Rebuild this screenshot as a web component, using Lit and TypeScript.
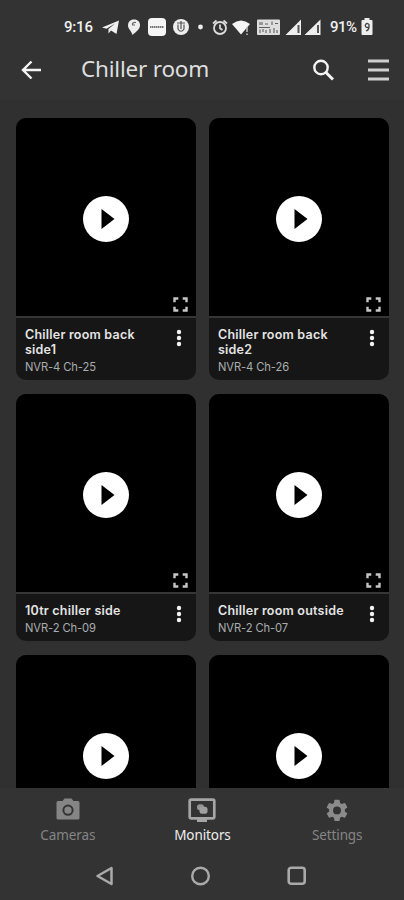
import { LitElement, html, css, svg, nothing } from "lit";
import { customElement, property } from "lit/decorators.js";

interface Camera { name: string; channel: string }

const cameras: (Camera | null)[] = [
  { name: "Chiller room back side1", channel: "NVR-4 Ch-25" },
  { name: "Chiller room back side2", channel: "NVR-4 Ch-26" },
  { name: "10tr chiller side", channel: "NVR-2 Ch-09" },
  { name: "Chiller room outside", channel: "NVR-2 Ch-07" },
  null,
  null,
];

const icon = (w: number, h: number, body: unknown) =>
  html`<svg width=${w} height=${h} viewBox="0 0 ${w} ${h}" fill="none">${body}</svg>`;

@customElement("camera-card")
class CameraCard extends LitElement {
  @property({ attribute: false }) camera: Camera | null = null;
  static styles = css`
    :host { display: flex; flex-direction: column; border-radius: 10px; overflow: hidden; background: #161616; }
    svg { display: block; }
    .video { display: grid; place-items: center; height: 199px; background: #000; position: relative; border-bottom: 2px solid #363636; }
    .play { width: 46px; height: 46px; border-radius: 50%; background: #fff; display: grid; place-items: center; margin-top: 3px; }
    .full { position: absolute; right: 8.5px; bottom: 4.5px; }
    .info { display: flex; justify-content: space-between; padding: 9px 13px 5px 9px; }
    .name { width: 130px; font: 600 12.5px/15px Inter, "Noto Sans", sans-serif; letter-spacing: 0.22px; color: #e4e4e4; }
    .channel { font: 400 11.2px/15px Inter, "Noto Sans", sans-serif; color: #a9adb0; margin-top: 3px; letter-spacing: -0.1px; }
    .more { margin-top: 2px; }
  `;
  render() {
    return html`
      <div class="video">
        <div class="play">${icon(46, 46, svg`<path d="M18.5 13V33L31.5 23Z" fill="#000"/>`)}</div>
        <div class="full">${icon(15, 15, svg`<path d="M1.5 5.3V1.5H5.3M9.7 1.5H13.5V5.3M13.5 9.7V13.5H9.7M5.3 13.5H1.5V9.7" stroke="#c6c6c6" stroke-width="2.4"/>`)}</div>
      </div>
      ${this.camera ? html`<div class="info">
        <div>
          <div class="name">${this.camera.name}</div>
          <div class="channel">${this.camera.channel}</div>
        </div>
        <div class="more">${icon(8, 18, svg`<g fill="#f2f2f2"><circle cx="4" cy="3" r="2.2"/><circle cx="4" cy="9" r="2.2"/><circle cx="4" cy="15" r="2.2"/></g>`)}</div>
      </div>` : nothing}`;
  }
}

@customElement("app-root")
class AppRoot extends LitElement {
  static styles = css`
    :host { display: flex; flex-direction: column; width: 404px; height: 900px; background: #333; overflow: hidden; color: #eee; }
    * { box-sizing: border-box; }
    svg { display: block; flex: none; }
    .status { display: flex; align-items: center; height: 44px; padding: 9px 0 0 64px; font: 500 15px/20px Roboto, sans-serif; color: #f0f0f0; flex: none; }
    .time { width: 38px; letter-spacing: -0.2px; }
    .pct { width: 31px; letter-spacing: -0.5px; }
    header { display: flex; align-items: center; height: 56px; padding: 0 15px 4px 20px; flex: none; }
    h1 { margin: 0 0 2px 38px; width: 230px; font: 400 22.5px/30px "Noto Sans", sans-serif; letter-spacing: -0.2px; color: #dedede; }
    .burger { margin-left: 32px; }
    main { flex: none; height: 688px; padding: 18px 15px 0 16px; background: #303030; overflow: hidden; }
    .grid { display: grid; grid-template-columns: 180px 180px; gap: 14px 13px; grid-template-rows: 262px 247px 247px; }
    nav { display: grid; grid-template-columns: repeat(3, 1fr); height: 62px; padding-top: 10px; flex: none; }
    .tab { display: flex; flex-direction: column; align-items: center; color: #858585; font: 400 13.5px/18px "Noto Sans", sans-serif; letter-spacing: -0.1px; gap: 3px; padding-left: 1px; }
    .active { color: #eee; }
    .system { display: flex; height: 50px; padding: 15px 0 0 94px; gap: 73px; flex: none; }
  `;
  render() {
    return html`
      <div class="status">
        <div class="time">9:16</div>
        ${icon(128, 20, svg`
          <path d="M0 10.5 17 3.5 14.5 17 9 13.5 6.5 16.5V12L13 6.5 4.5 11.8Z" fill="#f1f1f1"/>
          <path d="M32 2.5C28 2.5 26 5 26 8.5C26 12 29 13 30.5 18C34 15 38 12 38 8.5C38 5 36 2.5 32 2.5Z" fill="#eee"/>
          <path d="M34 5.5C31 5 30 6.5 30.5 8H33" stroke="#666" stroke-width="1.1"/>
          <rect x="46" y="1" width="18" height="18" rx="4" fill="#f5f5f5"/>
          <path d="M48 10H62" stroke="#777" stroke-width="2" stroke-dasharray="1.5 .5"/>
          <circle cx="79" cy="10" r="8" fill="#eee"/>
          <path d="M76 7.5V12Q79 16.5 82 12V7.5M75 6H83M79 4V12" stroke="#555" stroke-width="1.2"/>
          <circle cx="98.5" cy="10" r="2.4" fill="#eee"/>
          <circle cx="118" cy="11" r="6" stroke="#ddd" stroke-width="1.8"/>
          <path d="M118 7.5V11.3L120.5 13M111 6.5 114.5 3.5M125 6.5 121.5 3.5" stroke="#ddd" stroke-width="1.7"/>`)}
        ${icon(100, 20, svg`
          <path d="M2 7Q11 0 20 7L11 17.5Z" fill="#f5f5f5"/>
          <path d="M17 10V15M17 16.5V18" stroke="#bbb" stroke-width="1.6"/>
          <rect x="27" y="2.5" width="23" height="15.5" rx="1" fill="#dedede"/>
          <path d="M30 5V8M32 5V8M35 7H38M42 4.5V8M45 6.5H48M29 10.5H40M30 12.5V16M33 12V15M36 13V16M40 12V16M44 11V16M47 13V16" stroke="#606060" stroke-width="1.1"/>
          <path d="M55.5 18 71 2.5V18Z M74.5 18 90.5 2.5V18Z" fill="#eee"/>
          <path d="M68.5 8V16M88 8V16" stroke="#555" stroke-width="2"/>`)}
        <div class="pct">91%</div>
        ${icon(12, 18, svg`<path d="M3.5 2V0H8.5V2H10.5Q11.5 2 11.5 3V16Q11.5 17 10.5 17H1.5Q.5 17 .5 16V3Q.5 2 1.5 2Z" fill="#eee"/><path d="M8 8.5A2 2 0 1 1 8 6.5V9Q8 12 5 13" stroke="#444" stroke-width="1.3"/>`)}
      </div>
      <header>
        ${icon(23, 22, svg`<path d="M21 11H3.5M11.5 2.5 3 11 11.5 19.5" stroke="#f5f5f5" stroke-width="2.4"/>`)}
        <h1>Chiller room</h1>
        ${icon(24, 24, svg`<circle cx="10" cy="9.5" r="6.7" stroke="#f5f5f5" stroke-width="2.4"/><path d="M14.5 14 22 21.5" stroke="#f5f5f5" stroke-width="3"/>`)}
        <div class="burger">${icon(22, 22, svg`<path d="M1 2H22M1 11H22M1 20H22" stroke="#cecece" stroke-width="2.8"/>`)}</div>
      </header>
      <main><div class="grid">${cameras.map((c) => html`<camera-card .camera=${c}></camera-card>`)}</div></main>
      <nav>
        <div class="tab">${icon(24, 25, svg`<path fill-rule="evenodd" d="M8.5 .5H15.5L17.5 3H22Q23.5 3 23.5 4.5V20Q23.5 21.5 22 21.5H2Q.5 21.5 .5 20V4.5Q.5 3 2 3H6.5ZM12 6.6A5.6 5.6 0 1 0 12 17.8A5.6 5.6 0 1 0 12 6.6Z" fill="#858585"/><circle cx="12" cy="12.2" r="3.6" fill="#858585"/>`)}<span>Cameras</span></div>
        <div class="tab active">${icon(28, 25, svg`<rect x="1.7" y="1.7" width="24.6" height="18.6" rx="1.5" stroke="#a5a5a5" stroke-width="2.7"/><path d="M9 20H19V24H9Z" fill="#a5a5a5"/><rect x="9" y="6.3" width="7" height="6" rx="2.8" fill="#939393"/><rect x="11.5" y="8.7" width="8" height="7" rx="2.5" fill="#a0a0a0"/>`)}<span>Monitors</span></div>
        <div class="tab">${icon(24, 25, svg`<path transform="translate(-1.2 -.8) scale(1.1)" fill="#8b8b8b" d="M19.14 12.94c.04-.3.06-.61.06-.94s-.02-.64-.07-.94l2.03-1.58a.49.49 0 0 0 .12-.61l-1.92-3.32a.49.49 0 0 0-.59-.22l-2.39.96a7 7 0 0 0-1.62-.94l-.36-2.54a.48.48 0 0 0-.48-.41h-3.84a.48.48 0 0 0-.47.41l-.36 2.54a7 7 0 0 0-1.62.94l-2.39-.96a.48.48 0 0 0-.59.22L2.74 8.87a.48.48 0 0 0 .12.61l2.03 1.58a6 6 0 0 0 0 1.88l-2.03 1.58a.49.49 0 0 0-.12.61l1.92 3.32c.12.22.37.29.59.22l2.39-.96c.5.38 1.03.7 1.62.94l.36 2.54c.05.24.24.41.48.41h3.84c.24 0 .44-.17.47-.41l.36-2.54a7 7 0 0 0 1.62-.94l2.39.96c.22.08.47 0 .59-.22l1.92-3.32a.48.48 0 0 0-.12-.61zM12 15.6a3.6 3.6 0 1 1 0-7.2 3.6 3.6 0 0 1 0 7.2z"/>`)}<span>Settings</span></div>
      </nav>
      <div class="system">
        ${icon(22, 22, svg`<path d="M17.5 3V19L3.5 11Z" stroke="#aaa" stroke-width="2.5" stroke-linejoin="round"/>`)}
        ${icon(22, 22, svg`<circle cx="11.5" cy="11" r="8.3" stroke="#aaa" stroke-width="2.4"/>`)}
        ${icon(22, 22, svg`<rect x="4.7" y="2.7" width="16" height="16" rx="2.5" stroke="#aaa" stroke-width="2.6"/>`)}
      </div>`;
  }
}
